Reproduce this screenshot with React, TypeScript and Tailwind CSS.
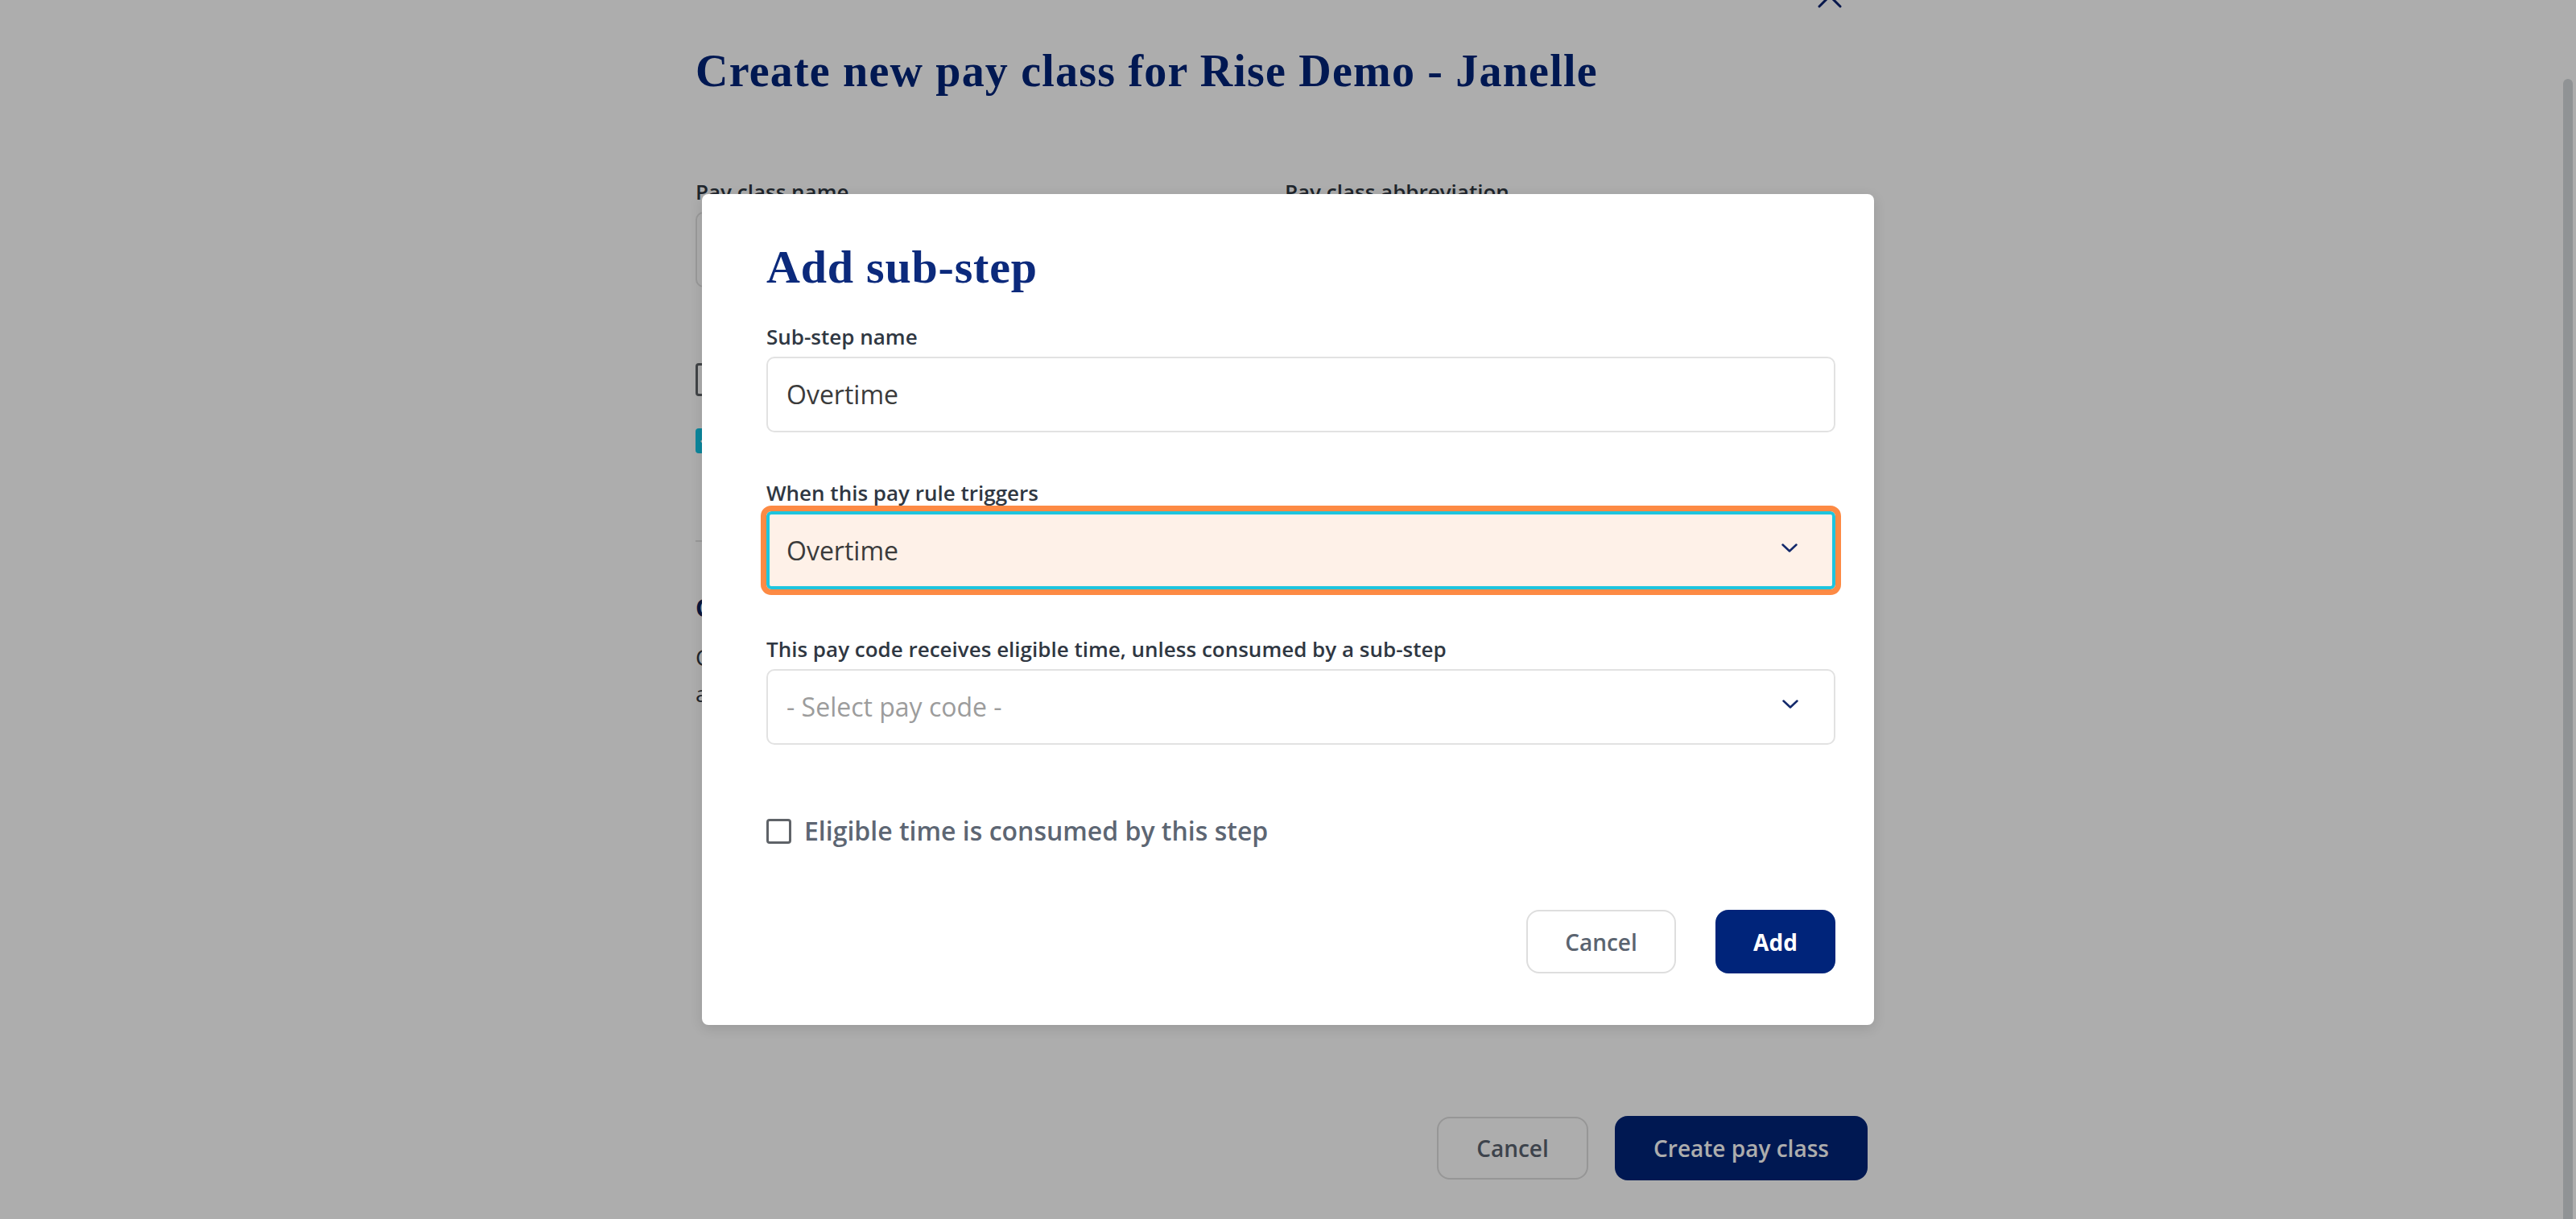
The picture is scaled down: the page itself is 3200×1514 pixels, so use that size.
import React from "react";

function Chevron() {
  return (
    <svg width="20" height="11" viewBox="0 0 20 11" fill="none">
      <path d="M1.5 1.5 L10 9.5 L18.5 1.5" stroke="#13296b" strokeWidth="2.5" strokeLinecap="round" strokeLinejoin="round" />
    </svg>
  );
}

function CloseX() {
  return (
    <svg width="30" height="30" viewBox="0 0 30 30" fill="none">
      <path d="M2 2 L28 28 M28 2 L2 28" stroke="#0b2270" strokeWidth="3" strokeLinecap="round" />
    </svg>
  );
}

function Field({ label, children }: { label: string; children: React.ReactNode }) {
  return (
    <div className="flex flex-col">
      <div className="text-[26px] leading-[36px] font-semibold text-[#2f3742]">{label}</div>
      {children}
    </div>
  );
}

export default function App() {
  return (
    <div className="relative h-[1514px] w-[3200px] overflow-hidden bg-white font-['Open_Sans',sans-serif]">
      {/* Background page */}
      <div className="flex h-full">
        <div className="flex flex-1 justify-center">
          <div className="relative flex w-[1456px] flex-col pt-[56px]">
            <button className="absolute right-[32px] top-[-20px]">
              <CloseX />
            </button>
            <h1 className="font-['Liberation_Serif',serif] text-[56px] font-bold leading-[64px] tracking-[1.2px] text-[#002479]">
              Create new pay class for Rise Demo - Janelle
            </h1>

            <div className="mt-[100px] grid grid-cols-[700px_700px] gap-x-[32px]">
              <Field label="Pay class name">
                <div className="mt-[7px] h-[94px] rounded-[10px] border-2 border-[#e2e2e2]" />
              </Field>
              <Field label="Pay class abbreviation">
                <div className="mt-[7px] h-[94px] rounded-[10px] border-2 border-[#e2e2e2]" />
              </Field>
            </div>

            <div className="mt-[92px] flex h-[45px] items-center gap-[16px]">
              <div className="h-[41px] w-[41px] rounded-[4px] border-[3px] border-[#5f6368]" />
              <span className="text-[30px] leading-[45px] font-semibold text-[#5d6673]">Overtime exempt</span>
            </div>
            <div className="mt-[31px] flex h-[45px] items-center gap-[16px]">
              <div className="flex h-[31px] w-[31px] items-center justify-center rounded-[4px] bg-[#12c6e6]">
                <svg width="20" height="16" viewBox="0 0 20 16" fill="none">
                  <path d="M2 8 L7.5 13.5 L18 2.5" stroke="white" strokeWidth="3" strokeLinecap="round" strokeLinejoin="round" />
                </svg>
              </div>
              <span className="text-[30px] leading-[45px] font-semibold text-[#5d6673]">Active pay class</span>
            </div>

            <div className="mt-[101px] border-t-2 border-[#e2e2e2]" />

            <h2 className="mt-[62px] text-[30px] font-bold leading-[40px] text-[#10225a]">Calculation steps</h2>
            <p className="mt-[19px] text-[28px] leading-[45px] text-[#2f3742]">
              Configure the order in which pay rules are applied to eligible time. Each step can include sub-steps
              <br />
              and a pay code that receives the remaining eligible time.
            </p>

            <div className="mt-[502px] flex items-center justify-end gap-[33px]">
              <button className="h-[78px] w-[188px] rounded-[16px] border-2 border-[#dedede] text-[28px] font-semibold text-[#5b6470]">
                Cancel
              </button>
              <button className="h-[80px] w-[314px] rounded-[16px] bg-[#002479] text-[28px] font-semibold text-white">
                Create pay class
              </button>
            </div>
          </div>
        </div>
        <div className="w-[16px] pt-[98px]">
          <div className="h-[1500px] w-[12px] rounded-full bg-[#d4d9dc]" />
        </div>
      </div>

      {/* Overlay + modal */}
      <div className="absolute inset-0 flex items-center justify-center bg-[rgba(0,0,0,0.32)]">
        <div className="flex h-[1032px] w-[1456px] flex-col rounded-[8px] bg-white pb-[64px] pl-[80px] pr-[48px] pt-[59px] shadow-[0_4px_16px_rgba(0,0,0,0.12)]">
          <h2 className="font-['Liberation_Serif',serif] text-[58px] font-bold leading-[64px] tracking-[0.8px] text-[#0c2a7c]">
            Add sub-step
          </h2>

          <div className="mt-[36px]">
            <Field label="Sub-step name">
              <div className="mt-[7px] flex h-[94px] items-center rounded-[10px] border-2 border-[#e2e2e2] pl-[23px] text-[32px] text-[#3b3b3b]">
                Overtime
              </div>
            </Field>
          </div>

          <div className="mt-[57px]">
            <Field label="When this pay rule triggers">
              <div className="mt-[5px] flex h-[97px] items-center justify-between rounded-[6px] border-4 border-[#1ec5de] bg-[#fef1e8] pl-[21px] pr-[43px] text-[32px] text-[#3b3b3b] outline outline-[7px] outline-[#fd8a44]">
                <span>Overtime</span>
                <span className="mb-[6px] flex">
                  <Chevron />
                </span>
              </div>
            </Field>
          </div>

          <div className="mt-[56px]">
            <Field label="This pay code receives eligible time, unless consumed by a sub-step">
              <div className="mt-[7px] flex h-[94px] items-center justify-between rounded-[10px] border-2 border-[#e2e2e2] pl-[23px] pr-[44px] text-[32px] text-[#9c9c9c]">
                <span>- Select pay code -</span>
                <span className="mb-[8px] flex">
                  <Chevron />
                </span>
              </div>
            </Field>
          </div>

          <label className="mt-[85px] flex h-[44px] items-center gap-[16px]">
            <span className="h-[31px] w-[31px] rounded-[4px] border-[3px] border-[#5f6368]" />
            <span className="text-[32px] font-semibold leading-[44px] text-[#5d6673]">Eligible time is consumed by this step</span>
          </label>

          <div className="mt-[76px] flex items-center justify-end gap-[49px]">
            <button className="h-[79px] w-[186px] rounded-[16px] border-2 border-[#dedede] text-[28px] font-semibold text-[#5b6470]">
              Cancel
            </button>
            <button className="h-[79px] w-[149px] rounded-[16px] bg-[#00247a] text-[28px] font-bold text-white">
              Add
            </button>
          </div>
        </div>
      </div>
    </div>
  );
}
